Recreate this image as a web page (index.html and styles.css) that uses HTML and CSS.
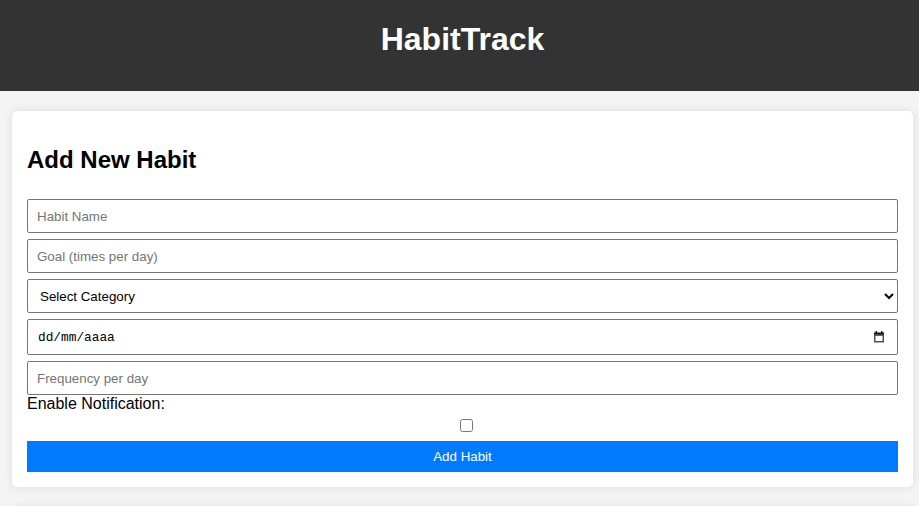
FILE: index.html
```html
<!DOCTYPE html>
<html lang="es">
<head>
<meta charset="utf-8">
<title>HabitTrack</title>
<link rel="stylesheet" href="styles.css">
</head>
<body>
<header class="site-header">
  <h1 class="brand">HabitTrack</h1>
</header>
<main class="main">
  <section class="card">
    <h2 class="card-title">Add New Habit</h2>
    <form class="habit-form">
      <input class="field" type="text" placeholder="Habit Name">
      <input class="field" type="text" placeholder="Goal (times per day)">
      <select class="field field-select">
        <option>Select Category</option>
      </select>
      <div class="field field-date">
        <span class="date-text">dd/mm/aaaa</span>
        <svg class="cal-icon" width="12" height="12" viewBox="0 0 12 12" aria-hidden="true">
          <rect x="1" y="1.5" width="10" height="3" fill="#111"/>
          <rect x="2.5" y="0" width="1.5" height="2" fill="#111"/>
          <rect x="8" y="0" width="1.5" height="2" fill="#111"/>
          <rect x="1.75" y="4" width="8.5" height="6.75" fill="none" stroke="#555" stroke-width="1.5"/>
        </svg>
      </div>
      <input class="field" type="text" placeholder="Frequency per day">
      <label class="notify-label">Enable Notification:</label>
      <div class="check-row"><input class="check" type="checkbox"></div>
      <button class="submit" type="button">Add Habit</button>
    </form>
  </section>
  <section class="card card-next"></section>
</main>
</body>
</html>
```
FILE: styles.css
```css
* { box-sizing: border-box; }
html, body {
  margin: 0;
  padding: 0;
  background: #f4f4f4;
  font-family: "Liberation Sans", Arial, sans-serif;
  overflow: hidden;
}
.site-header {
  background: #333;
  color: #fff;
  height: 91px;
  text-align: center;
  padding: 21px 0 0 6px;
}
.brand {
  margin: 0;
  font-size: 32px;
  line-height: 37px;
  font-weight: bold;
}
.main {
  padding: 20px 6px 0 12px;
}
.card {
  background: #fff;
  border-radius: 5px;
  box-shadow: 0 0 10px rgba(0, 0, 0, 0.1);
  padding: 15px;
}
.card-next {
  margin-top: 20px;
  height: 100px;
}
.card-title {
  margin: 20px 0 25px;
  font-size: 24px;
  line-height: 28px;
  font-weight: bold;
  color: #000;
}
.habit-form {
  display: flex;
  flex-direction: column;
}
.field {
  display: block;
  width: 100%;
  height: 34px;
  margin: 6px 0 0;
  padding: 0 9px;
  border: 1px solid #767676;
  border-radius: 2px;
  font-family: "Liberation Sans", Arial, sans-serif;
  font-size: 13.33px;
  color: #000;
  background: #fff;
}
.habit-form > .field:first-child { margin-top: 0; }
.field::placeholder { color: #757575; }
.field-select {
  padding: 0 6px 0 8px;
}
.field-date {
  height: 36px;
  display: flex;
  align-items: center;
  justify-content: space-between;
  padding: 0 10px 0 10px;
}
.date-text {
  font-family: "Liberation Mono", "DejaVu Sans Mono", monospace;
  font-size: 12.8px;
  color: #000;
}
.cal-icon { display: block; margin-right: 2px; }
.notify-label {
  font-size: 16px;
  line-height: 18px;
  color: #000;
}
.check-row {
  display: flex;
  justify-content: center;
  padding: 6px 0 9px 7px;
}
.check {
  margin: 0;
  width: 13px;
  height: 13px;
}
.submit {
  display: block;
  width: 100%;
  height: 31px;
  background: #007bff;
  color: #fff;
  border: none;
  border-radius: 0;
  font-family: "Liberation Sans", Arial, sans-serif;
  font-size: 13.33px;
  padding: 0;
}
```
